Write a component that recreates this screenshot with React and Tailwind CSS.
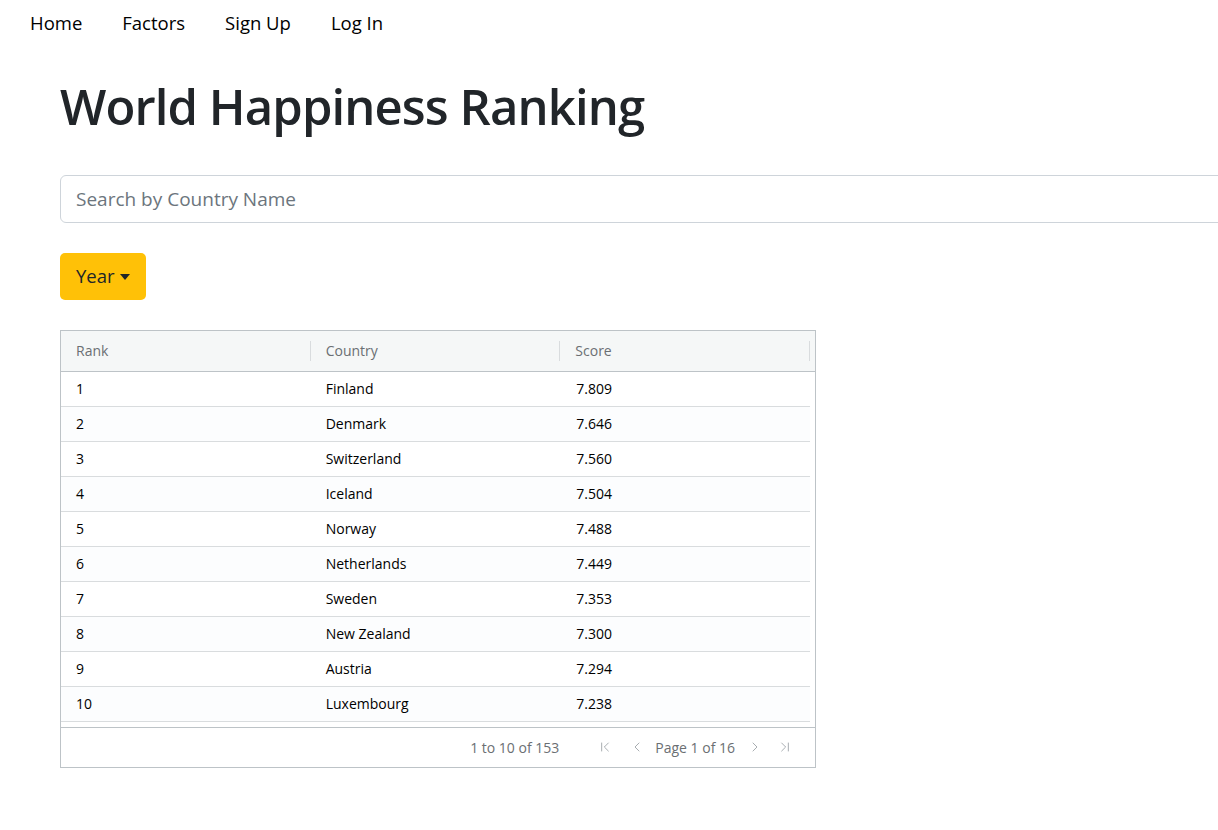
import { ChevronLeft, ChevronRight, ChevronFirst, ChevronLast } from "lucide-react";

const rows = [
  [1, "Finland", "7.809"],
  [2, "Denmark", "7.646"],
  [3, "Switzerland", "7.560"],
  [4, "Iceland", "7.504"],
  [5, "Norway", "7.488"],
  [6, "Netherlands", "7.449"],
  [7, "Sweden", "7.353"],
  [8, "New Zealand", "7.300"],
  [9, "Austria", "7.294"],
  [10, "Luxembourg", "7.238"],
];

function App() {
  return (
    <div className="min-h-screen bg-white text-[#212529] overflow-hidden" style={{ fontFamily: '"Open Sans", "Noto Sans", sans-serif' }}>
      {/* nav */}
      <nav className="flex items-center gap-10 pl-[30px] h-[46px] text-[18.5px] text-black">
        <a className="cursor-pointer">Home</a>
        <a className="cursor-pointer">Factors</a>
        <a className="cursor-pointer">Sign Up</a>
        <a className="cursor-pointer">Log In</a>
      </nav>

      <div className="pl-[60px]">
        <h1 className="text-[49px] font-semibold leading-[1.2] mt-[31px] tracking-[-0.9px]">World Happiness Ranking</h1>

        <input
          type="text"
          placeholder="Search by Country Name"
          className="mt-[39px] w-[1200px] h-[48px] px-[15px] text-[19px] border border-[#ced4da] rounded-[6px] placeholder:text-[#6c757d] focus:outline-none"
        />

        <div className="mt-[30px]">
          <button className="h-[47px] px-[16px] bg-[#ffc107] rounded-[5px] text-[18.5px] text-[#212529] flex items-center gap-[5px]">
            Year
            <span className="inline-block w-0 h-0 border-l-[5px] border-r-[5px] border-t-[6px] border-l-transparent border-r-transparent border-t-[#212529] mt-[2px]" />
          </button>
        </div>

        {/* grid */}
        <div className="mt-[30px] w-[756px] border border-[#bdc3c7] text-[14px]">
          <div className="flex h-[41px] bg-[#f5f7f7] border-b border-[#bdc3c7] text-[#6b6f73] pr-[5px]">
            {["Rank", "Country", "Score"].map((h) => (
              <div key={h} className="w-[250px] flex items-center relative pl-[15px]">
                {h}
                <span className="absolute right-0 top-[10px] h-[20px] w-px bg-[#d9dcde]" />
              </div>
            ))}
          </div>
          <div className="pr-[5px]">
            {rows.map((r, i) => (
              <div
                key={r[0]}
                className={`flex h-[35px] items-center border-b border-[#d9dcde] text-[#000] ${i % 2 === 1 ? "bg-[#fcfdfe]" : "bg-white"}`}
              >
                <div className="w-[250px] pl-[15px]">{r[0]}</div>
                <div className="w-[250px] pl-[15px]">{r[1]}</div>
                <div className="w-[250px] pl-[16px]">{r[2]}</div>
              </div>
            ))}
            <div className="h-[5px]" />
          </div>
          <div className="h-[40px] border-t border-[#bdc3c7] flex items-center justify-end pr-[22px] text-[#6b6f73] text-[14px]">
            <span className="mr-[38px]">1 to 10 of 153</span>
            <ChevronFirst size={16} strokeWidth={1.3} className="text-[#9aa0a5]" />
            <ChevronLeft size={16} strokeWidth={1.3} className="text-[#9aa0a5] ml-[16px]" />
            <span className="ml-[10px] mr-[12px]">Page 1 of 16</span>
            <ChevronRight size={16} strokeWidth={1.3} className="text-[#9aa0a5]" />
            <ChevronLast size={16} strokeWidth={1.3} className="text-[#9aa0a5] ml-[14px]" />
          </div>
        </div>
      </div>
    </div>
  );
}

export default App;
